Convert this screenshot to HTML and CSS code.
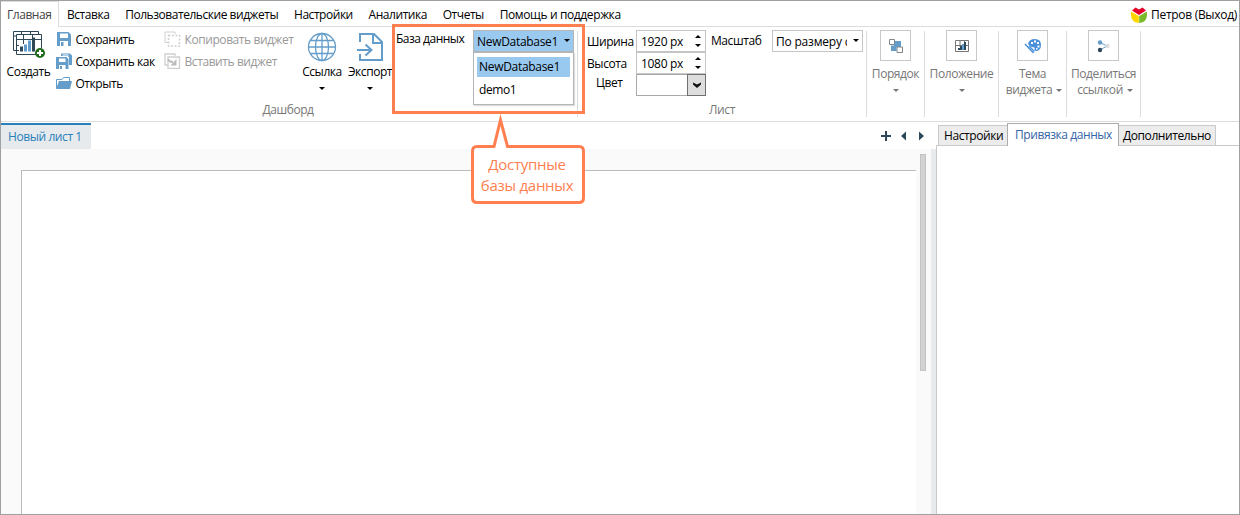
FILE: index.html
```html
<!DOCTYPE html>
<html lang="ru">
<head>
<meta charset="utf-8">
<title>Дашборд</title>
<link rel="stylesheet" href="styles.css">
</head>
<body>
<div class="app">
  <nav class="menu">
    <span class="menu-item active">Главная</span>
    <span class="menu-item">Вставка</span>
    <span class="menu-item">Пользовательские виджеты</span>
    <span class="menu-item">Настройки</span>
    <span class="menu-item">Аналитика</span>
    <span class="menu-item">Отчеты</span>
    <span class="menu-item">Помощь и поддержка</span>
    <span class="user">
      <svg width="16" height="16" viewBox="0 0 16 16"><path d="M1 3.500 4.500.5 8 2.500 11.500.5 15 3.500 8 8Z" fill="#e4002b"/><path d="M0 4.500 7.800 9V16Q0 15 0 8Z" fill="#ffd500"/><path d="M16 4.500 8.200 9V16Q16 15 16 8Z" fill="#7ab928"/></svg>
      <span class="user-name">Петров (Выход)</span>
    </span>
  </nav>

  <div class="ribbon">
    <section class="group dash">
      <div class="group-body dash-body">
        <div class="big create">
          <svg width="34" height="30" viewBox="0 0 34 30" fill="none" stroke="#2f4858"><path d="M4.500 20.500H1.500V1.500H26.500V4M1.500 6H5M9.500 1.500V4M18.500 1.500V4" /><path d="M25 24.500H4.500V4.500H29.500V18M4.500 9.500H29.500M4.500 15.500H8M4.500 20.500H8M11.500 4.500V14M20.500 4.500V10"/><path d="M7 14h17v9H7z" fill="#fff" stroke="none"/><path d="M8 16.500h3v5H8z" fill="#2f4858" stroke="none"/><path d="M12 14.500h3v7h-3z" fill="#649dca" stroke="none"/><path d="M16 10.500h3v11h-3z" fill="#649dca" stroke="none"/><path d="M20 7.500h3v14h-3z" fill="#2f4858" stroke="none"/><circle cx="28" cy="23" r="5" fill="#226b1c" stroke="none"/><path d="M25 23h6M28 20v6" stroke="#fff" stroke-width="2"/></svg>
          <span class="t t-create">Создать</span>
        </div>
        <div class="list files">
          <div class="row"><svg width="16" height="16" viewBox="0 0 16 16"><path d="M1 1H12.500L15 3.500V15H1Z" fill="#649dca"/><path d="M4 2.500H12V7H4ZM4 10H12V15H4Z" fill="#fff"/><path d="M5 11h2.500v4H5z" fill="#649dca"/></svg><span class="t t-save">Сохранить</span></div>
          <div class="row"><svg width="16" height="16" viewBox="0 0 16 16"><path d="M5 .5H14L16 2.500V12H13V4L11.500 3H5Z" fill="#649dca"/><path d="M6.500 1.500h6v1h-6z" fill="#fff"/><path d="M0 4H10.500L12.500 6V16H0Z" fill="#649dca"/><path d="M3 5.500H9.500V9H3ZM3 12H9.500V16H3Z" fill="#fff"/><path d="M4 13h2v3H4z" fill="#649dca"/></svg><span class="t t-saveas">Сохранить как</span></div>
          <div class="row"><svg width="16" height="16" viewBox="0 0 16 16"><path d="M.5 13V4.500H6L7.500 2.500H13.500V6" fill="none" stroke="#649dca"/><path d="M3 6H16L14 14H0Z" fill="#649dca"/></svg><span class="t t-open">Открыть</span></div>
        </div>
        <div class="list clip">
          <div class="row"><svg width="17" height="16" viewBox="0 0 17 16" fill="none" stroke="#cfcfcf"><path d="M4 11.500H1V1H11V3"/><path d="M4.500 4.500H15.500V15H4.500Z" stroke-width="1.500" stroke-dasharray="2 1.500"/></svg><span class="t t-copy">Копировать виджет</span></div>
          <div class="row"><svg width="17" height="16" viewBox="0 0 17 16" fill="none" stroke="#cfcfcf"><path d="M4 12H1V1H11V3M4 4H15.500V15.500H4Z" stroke-width="1.300"/><path d="M4 6Q5 9 9 9" stroke="#bbb" stroke-width="2"/><path d="M12.500 6V12.500H6.500Z" fill="#bbb" stroke="none"/></svg><span class="t t-paste">Вставить виджет</span></div>
        </div>
        <div class="big link">
          <svg width="30" height="30" viewBox="0 0 30 30" fill="none" stroke="#649dca" stroke-width="1.300"><circle cx="15" cy="15" r="13.500"/><ellipse cx="15" cy="15" rx="6.500" ry="13.500"/><path d="M15 1.500V28.500M1.500 15H28.500M3.500 8.500H26.500M3.500 21.500H26.500"/></svg>
          <span class="t t-link">Ссылка</span><i class="arrow"></i>
        </div>
        <div class="big export">
          <svg width="28" height="30" viewBox="0 0 28 30" fill="none" stroke="#649dca" stroke-width="2"><path d="M4 10V2H18L26 10V28H4V22M17 2V11H26M1 18H15M9.500 12.500 15.500 18 9.500 23.500"/></svg>
          <span class="t t-export">Экспорт</span><i class="arrow"></i>
        </div>
        <div class="db">
          <span class="t t-db">База данных</span>
          <div class="select">
            <span class="t t-value">NewDatabase1</span><i class="arrow small"></i>
            <div class="options">
              <div class="option selected"><span class="t t-value">NewDatabase1</span></div>
              <div class="option"><span class="t t-demo">demo1</span></div>
            </div>
          </div>
        </div>
      </div>
      <div class="caption"><span class="t t-dash">Дашборд</span></div>
    </section>

    <section class="group sheet">
      <div class="group-body sheet-body">
        <div class="fields">
          <span class="t t-width">Ширина</span><div class="spin"><span class="t t-px">1920 px</span><span class="steps"><i class="up"></i><i class="arrow step"></i></span></div>
          <span class="t t-height">Высота</span><div class="spin"><span class="t t-px">1080 px</span><span class="steps"><i class="up"></i><i class="arrow step"></i></span></div>
          <span class="t t-color">Цвет</span><div class="color"><span class="color-btn"><svg width="10" height="8" viewBox="0 0 10 8"><path d="M1 1.500 5 3.500 9 1.500V3.500L5 7 1 3.500Z" fill="#111"/></svg></span></div>
        </div>
        <span class="t t-scale">Масштаб</span>
        <div class="scale"><span class="scale-text"><span class="t t-size">По размеру с</span></span><i class="arrow small"></i></div>
      </div>
      <div class="caption"><span class="t t-sheet">Лист</span></div>
    </section>

    <section class="group tool order">
      <span class="tile"><svg width="16" height="16" viewBox="0 0 16 16"><path d="M6 3h7v6H6z" fill="#649dca"/><path d="M3 7.500h5.500V13H3z" fill="#649dca"/><path d="M1.500 1.500h5v5h-5zM9 9h5.500v5.500H9z" fill="#fff" stroke="#7f878c"/></svg></span>
      <span class="t t-order">Порядок</span><i class="arrow muted"></i>
    </section>
    <section class="group tool position">
      <span class="tile"><svg width="16" height="16" viewBox="0 0 16 16" fill="none" stroke="#777"><path d="M1.500 2.500h13v11h-13zM1.500 7.500h13M6 2.500V9M10.500 2.500V9"/><path d="M4 10h2v2H4z" fill="#2f4858" stroke="none"/><path d="M6 8h2v4H6z" fill="#2f4858" stroke="none"/><path d="M8 6h2v6H8z" fill="#649dca" stroke="none"/><path d="M10 4h2v8h-2z" fill="#2f4858" stroke="none"/></svg></span>
      <span class="t t-position">Положение</span><i class="arrow muted"></i>
    </section>
    <section class="group tool theme">
      <span class="tile"><svg width="18" height="16" viewBox="0 0 18 16"><path d="M4 6Q5 1 11 1 17 1 17 7 17 12 13 13 10 13.500 10.500 11 11 9 9 9 7 10 4 6Z" fill="#4a90d9"/><path d="M7 4h2v2H7zM10 2.500h2v2h-2zM13 4h2v2h-2zM13.500 7.500h2v2h-2zM12 10h1.500v1.500H12z" fill="#fff"/><path d="M1 6 9.500 15M5 8 10.500 13.500" stroke="#4a90d9" stroke-width="1.400"/></svg></span>
      <span class="t t-theme">Тема</span><span class="line"><span class="t t-widget">виджета</span><i class="arrow muted"></i></span>
    </section>
    <section class="group tool share">
      <span class="tile"><svg width="16" height="16" viewBox="0 0 16 16"><path d="M4 4.500 11 8 4 12" stroke="#649dca" fill="none"/><circle cx="4" cy="4.500" r="2.200" fill="#649dca"/><circle cx="4" cy="12" r="2.200" fill="#2f4858"/><circle cx="11.500" cy="8" r="2.200" fill="#ddd"/></svg></span>
      <span class="t t-share">Поделиться</span><span class="line"><span class="t t-ref">ссылкой</span><i class="arrow muted"></i></span>
    </section>
  </div>

  <main class="work">
    <div class="editor">
      <div class="sheets">
        <span class="sheet-tab"><span class="t t-newsheet">Новый лист 1</span></span>
        <svg class="sheet-nav" width="48" height="12" viewBox="0 0 48 12"><path d="M0 6h10M5 1v10" stroke="#2f4858" stroke-width="2"/><path d="M25 1.500V10.500L20 6ZM38 1.500V10.500L43 6Z" fill="#2f4858"/></svg>
      </div>
      <div class="canvas">
        <div class="page"></div>
        <div class="scroll"></div>
      </div>
    </div>
    <div class="splitter"></div>
    <aside class="panel">
      <div class="panel-tabs">
        <span class="ptab p1"><span class="t t-p1">Настройки</span></span>
        <span class="ptab p2"><span class="t t-p2">Привязка данных</span></span>
        <span class="ptab p3"><span class="t t-p3">Дополнительно</span></span>
      </div>
      <div class="panel-body"></div>
    </aside>
  </main>

  <div class="highlight"></div>
  <div class="callout">
    <svg width="114" height="92" viewBox="0 0 114 92"><path d="M6 32.500H23L29.500 6 36.500 32.500H108Q112.500 32.500 112.500 37V84Q112.500 88.500 108 88.500H6Q1.500 88.500 1.500 84V37Q1.500 32.500 6 32.500Z" fill="#fff" stroke="#ff7f50" stroke-width="3" stroke-miterlimit="12"/></svg>
    <div class="callout-text"><span class="t t-avail">Доступные</span><span class="t t-bases">базы данных</span></div>
  </div>
</div>
</body>
</html>
```

FILE: styles.css
```css
* { box-sizing: border-box; }
body { margin: 0; background: #fff; font: 12px/16px "Open Sans", "Noto Sans", sans-serif; letter-spacing: -0.42px; color: #000; }
svg { display: block; flex: none; }
.t { white-space: nowrap; flex: none; }
.app { position: relative; width: 1240px; height: 515px; border: 1px solid #a0a0a0; overflow: hidden; display: flex; flex-direction: column; }

.menu { height: 26px; flex: none; display: flex; border-bottom: 1px solid #dcdcdc; letter-spacing: -0.46px; }
.menu-item { padding: 6px 7.800px 0 8px; white-space: nowrap; }
.menu-item:nth-child(7) { letter-spacing: -0.38px; }
.menu-item.active { width: 58px; height: 26px; padding-left: 6px; background: #fff; border: solid #dcdcdc; border-width: 1px 1px 0 0; padding-top: 5px; color: #444; }
.user { margin-left: auto; display: flex; gap: 4px; padding: 6px 2px 0 0; white-space: nowrap; letter-spacing: -0.3px; }

.ribbon { height: 95px; flex: none; display: flex; border-bottom: 1px solid #dcdcdc; }
.group { height: 86px; margin-top: 4px; border-right: 1px solid #dcdcdc; display: flex; flex-direction: column; flex: none; }
.group-body { height: 71px; flex: none; display: flex; }
.caption { text-align: center; color: #777; }
.dash { width: 577px; }
.dash .caption { padding-right: 2px; }
.sheet { width: 289px; }

.big { display: flex; flex-direction: column; align-items: center; flex: none; }
.big .t { margin-top: 3px; }
.create { width: 55px; }
.create svg { margin: -1px 0 1px 0; }
.link { width: 46px; margin-left: 6px; }
.export { width: 50px; }
.link svg, .export svg { margin-top: 1px; }
.link .t, .export .t { margin-top: 2px; }
.list { margin-top: -3px; flex: none; }
.row { height: 22px; display: flex; align-items: center; gap: 3.500px; }
.row .t { padding-top: 2px; }
.files { width: 107px; letter-spacing: -0.46px; }
.clip { width: 129px; color: #999; margin-left: 1px; }
.arrow { width: 0; height: 0; border: 3px solid transparent; border-top: 3px solid #000; border-bottom: 0; flex: none; }
.big .arrow { margin-top: 7px; }
.arrow.muted { border-top-color: #777; }
.db { display: flex; margin-left: 1px; }
.db > .t { width: 77px; letter-spacing: -0.5px; }
.t-value, .t-px { letter-spacing: -0.3px; }
.select { position: relative; width: 101px; height: 22px; margin-top: -1px; border: 1px solid #b5b5b5; background: #99c9ef; display: flex; align-items: center; justify-content: space-between; padding: 0 3px; }
.select > .t { padding-top: 2px; }
.arrow.small { margin-top: -2px; }
.options { position: absolute; left: -1px; top: 21px; width: 101px; height: 53px; padding: 4px 3px; border: 1px solid #b5b5b5; background: #fff; box-shadow: 1px 1px 1px #ddd; }
.option { height: 20px; padding: 2px 2px; width: 93px; margin-bottom: 3px; }
.option.selected { background: #99c9ef; }

.sheet-body { padding-left: 9px; }
.fields { display: grid; grid-template-columns: 49px 70px; grid-auto-rows: 22px; margin-top: -1px; align-items: center; }
.fields .t { padding-top: 2px; }
.fields .t-color { padding: 1px 0 0 9px; margin-top: -5px; }
.spin { height: 22px; border: 1px solid #c5c5c5; display: flex; align-items: center; justify-content: space-between; padding: 0 4px; }
.steps { display: flex; flex-direction: column; gap: 6px; }
.up { width: 0; height: 0; border: 3px solid transparent; border-bottom: 3px solid #000; border-top: 0; }
.color { height: 22px; border: 1px solid #aaa; display: flex; justify-content: flex-end; }
.color-btn { width: 19px; height: 22px; margin: -1px -1px 0 0; border: 1px solid #707070; background: #ddd; display: grid; place-items: center; }
.t-scale { margin: 2px 0 0 5px; width: 61px; }
.scale { width: 91px; height: 22px; margin-top: -1px; border: 1px solid #c5c5c5; display: flex; align-items: center; justify-content: space-between; padding: 0 3px; }
.scale-text { width: 71px; overflow: hidden; white-space: nowrap; padding-top: 2px; letter-spacing: -0.2px; }

.tool { align-items: center; color: #777; }
.tile { width: 31px; height: 31px; margin-top: -1px; margin-bottom: 5px; border: 1px solid #c8c8c8; display: grid; place-items: center; flex: none; }
.tool > .arrow { margin-top: 7px; }
.order { width: 58px; }
.position { width: 74px; }
.theme { width: 68px; }
.share { width: 74px; }
.line { display: flex; align-items: center; gap: 4px; padding-left: 3px; }

.work { flex: 1; min-height: 0; display: flex; }
.editor { width: 930px; display: flex; flex-direction: column; }
.sheets { height: 27px; display: flex; justify-content: space-between; padding-top: 1px; }
.sheet-tab { width: 90px; height: 26px; background: #e6eaed; border-top: 2px solid #2980b9; color: #2980b9; padding: 4px 0 0 7px; }
.sheet-nav { margin: 7px 2px 0 0; }
.canvas { flex: 1; background: #fafafa; display: flex; justify-content: space-between; padding: 0 5px 0 20px; }
.page { width: 895px; margin-top: 21px; border: solid #bbb; border-width: 1px 0 0 1px; background: #fff; }
.scroll { width: 6px; height: 217px; margin-top: 5px; background: #d2d2d2; border: 1px solid #c3c3c3; }
.splitter { width: 5px; margin-top: 27px; background: #e8ebed; }
.panel { flex: 1; display: flex; flex-direction: column; }
.panel-tabs { height: 23px; display: flex; align-items: flex-end; padding-left: 2px; flex: none; }
.ptab { height: 20px; border: 1px solid #c9c9c9; border-bottom: 0; background: #ececec; padding: 2px 0 0 5px; flex: none; }
.p1 { width: 69px; border-right: 0; }
.p2 { position: relative; width: 112px; height: 23px; background: #fff; border-color: #acacac; color: #3465a4; padding: 3px 0 0 7px; margin-bottom: -1px; }
.p3 { width: 97px; border-left: 0; padding-left: 4px; }
.panel-body { flex: 1; border: solid #c9c9c9; border-width: 1px 0 0 1px; }

.highlight { position: absolute; left: 391px; top: 23px; width: 193px; height: 90px; border: 3px solid #ff7f50; }
.callout { position: absolute; left: 470px; top: 113px; width: 114px; height: 92px; }
.callout-text { position: absolute; inset: 40px 0 0; display: flex; flex-direction: column; align-items: center; padding-right: 2px; font-size: 15px; line-height: 21px; letter-spacing: -0.25px; color: #ff7f50; }
```
